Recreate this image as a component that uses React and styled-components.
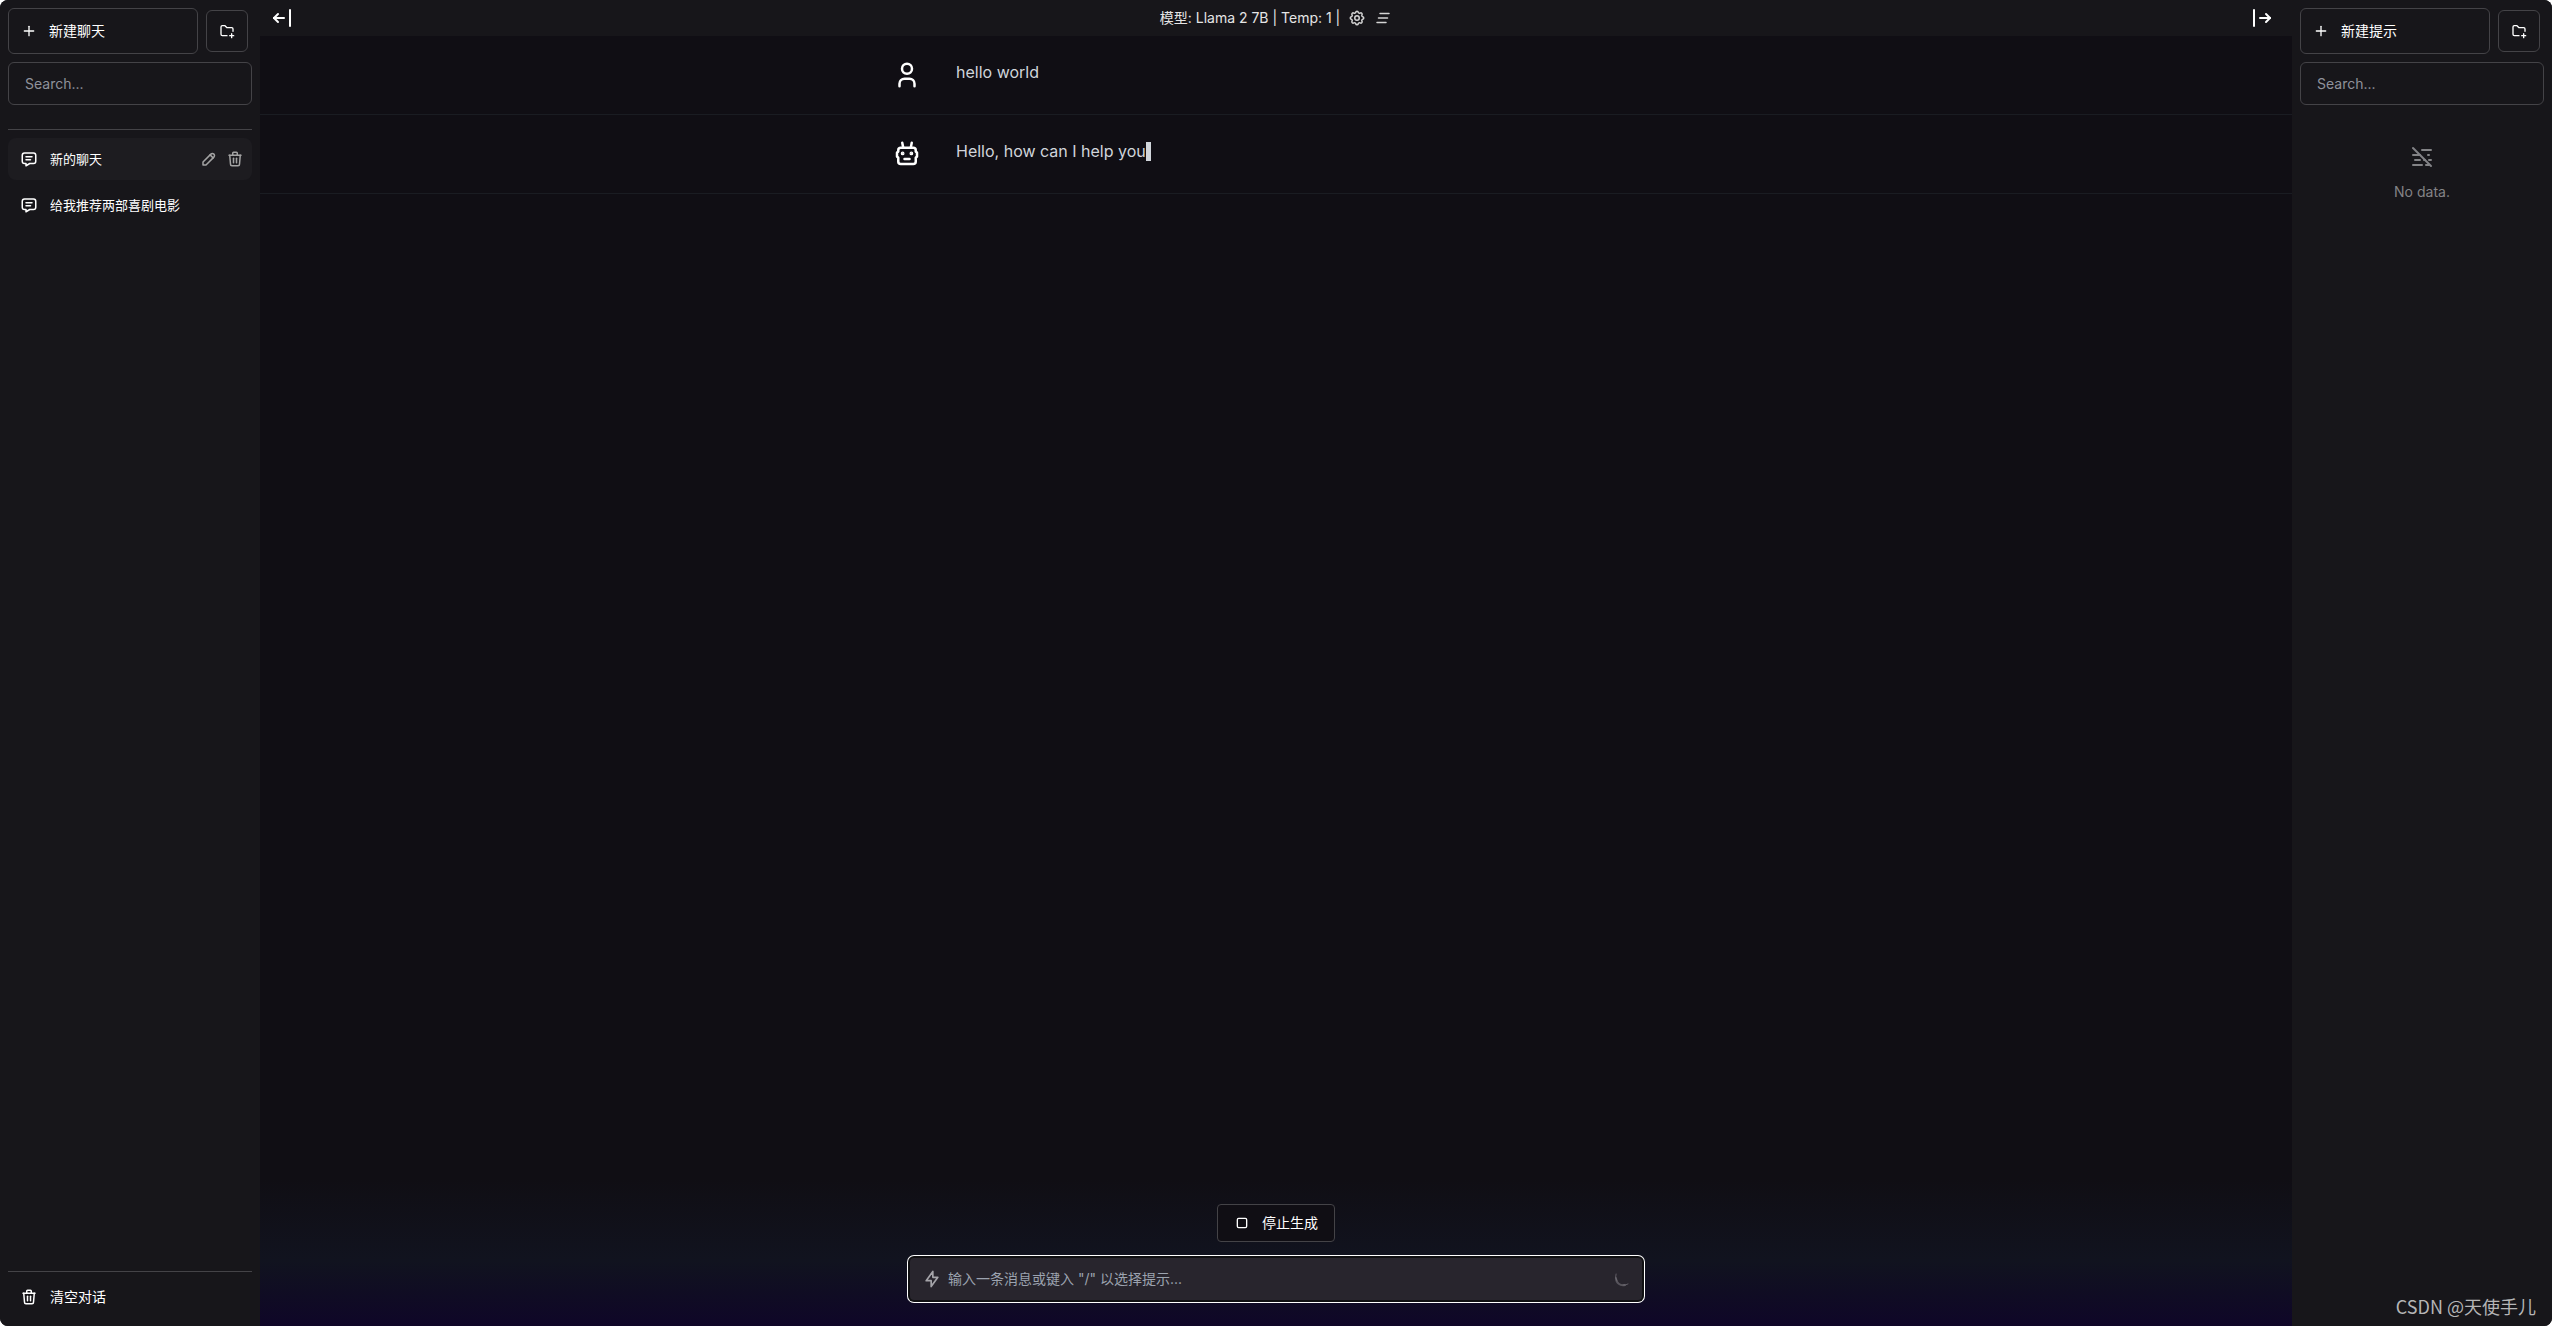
import React from "react";
import styled, { createGlobalStyle } from "styled-components";
import {
  TbArrowBarLeft,
  TbArrowBarRight,
  TbBolt,
  TbClearAll,
  TbFolderPlus,
  TbMessage,
  TbMistOff,
  TbPencil,
  TbPlayerStop,
  TbPlus,
  TbSettings,
  TbTrash,
  TbUser,
} from "react-icons/tb";

const chats = [
  { id: 1, name: "新的聊天", active: true },
  { id: 2, name: "给我推荐两部喜剧电影", active: false },
];

const RobotIcon = () => (
  <svg width="30" height="30" viewBox="0 0 24 24" fill="none" stroke="currentColor" strokeWidth="2" strokeLinecap="round" strokeLinejoin="round">
    <path d="M7 7h10a2 2 0 0 1 2 2v1l1 1v3l-1 1v3a2 2 0 0 1-2 2H7a2 2 0 0 1-2-2v-3l-1-1v-3l1-1V9a2 2 0 0 1 2-2z" />
    <path d="M10 16h4" />
    <circle cx="8.5" cy="11.5" r=".5" fill="currentColor" />
    <circle cx="15.5" cy="11.5" r=".5" fill="currentColor" />
    <path d="M9 7l-.8-4M15 7l.8-4" />
  </svg>
);

const SpinnerIcon = () => (
  <svg width="16" height="16" viewBox="0 0 16 16" fill="none" stroke="#77747c" strokeLinecap="round">
    <path d="M2 3a7 7 0 0 0 1 7" strokeWidth="1" opacity=".7" />
    <path d="M2 7a7 7 0 0 0 9 7" strokeWidth="2" opacity=".6" />
    <path d="M9 14a7 7 0 0 0 5-1" strokeWidth="1" opacity=".7" />
  </svg>
);

const SidebarTop = ({ label, id }) => (
  <>
    <Actions>
      <NewButton type="button">
        <TbPlus size={16} />
        {label}
      </NewButton>
      <FolderButton type="button" aria-label="New folder">
        <TbFolderPlus size={16} />
      </FolderButton>
    </Actions>
    <Search id={id} type="text" placeholder="Search..." aria-label="Search..." />
  </>
);

const App = () => {
  return (
    <>
      <GlobalStyle />
      <Page>
        <Sidebar>
          <SidebarTop label="新建聊天" id="search-chats" />
          <ChatList>
            {chats.map((chat) => (
              <ChatRow key={chat.id} $active={chat.active}>
                <ChatButton type="button">
                  <TbMessage size={18} />
                  <ChatName>{chat.name}</ChatName>
                </ChatButton>
                {chat.active && (
                  <RowActions>
                    <IconButton type="button" aria-label="Edit">
                      <TbPencil size={18} />
                    </IconButton>
                    <IconButton type="button" aria-label="Delete">
                      <TbTrash size={18} />
                    </IconButton>
                  </RowActions>
                )}
              </ChatRow>
            ))}
          </ChatList>
          <SidebarFooter>
            <ClearButton type="button">
              <TbTrash size={18} />
              清空对话
            </ClearButton>
          </SidebarFooter>
        </Sidebar>

        <Main>
          <TopBar>
            <ToggleButton type="button" aria-label="Hide chats">
              <TbArrowBarLeft size={24} />
            </ToggleButton>
            <ModelInfo>
              <span>模型: Llama 2 7B | Temp: 1 |</span>
              <HeaderButton type="button" aria-label="Settings">
                <TbSettings size={18} />
              </HeaderButton>
              <HeaderButton type="button" aria-label="Clear all">
                <TbClearAll size={18} />
              </HeaderButton>
            </ModelInfo>
            <ToggleButton type="button" aria-label="Hide prompts" $right>
              <TbArrowBarRight size={24} />
            </ToggleButton>
          </TopBar>

          <Messages>
            <Message>
              <MessageInner>
                <Avatar>
                  <TbUser size={30} />
                </Avatar>
                <MessageText>hello world</MessageText>
              </MessageInner>
            </Message>
            <Message>
              <MessageInner>
                <Avatar>
                  <RobotIcon />
                </Avatar>
                <MessageText>
                  Hello, how can I help you
                  <Cursor />
                </MessageText>
              </MessageInner>
            </Message>
          </Messages>

          <Composer>
            <StopButton type="button">
              <TbPlayerStop size={16} />
              停止生成
            </StopButton>
            <InputBox>
              <TbBolt size={20} />
              <Prompt rows={1} aria-label="Message" placeholder={'输入一条消息或键入 "/" 以选择提示...'} />
              <SpinnerIcon />
            </InputBox>
          </Composer>
        </Main>

        <Sidebar>
          <SidebarTop label="新建提示" id="search-prompts" />
          <Empty>
            <TbMistOff size={24} />
            No data.
          </Empty>
        </Sidebar>
        <Watermark>CSDN @天使手儿</Watermark>
      </Page>
    </>
  );
};

export default App;

const GlobalStyle = createGlobalStyle`
  * {
    box-sizing: border-box;
  }

  body {
    margin: 0;
    background: #ffffff;
  }

  body, button, input, textarea {
    font-family: Inter, "Noto Sans CJK SC", sans-serif;
    font-size: 14px;
    line-height: 20px;
  }

  button {
    padding: 0;
    border: 0;
    background: none;
    color: inherit;
    cursor: pointer;
  }

  svg {
    display: block;
    flex-shrink: 0;
  }
`;

const Page = styled.div`
  position: relative;
  display: flex;
  height: 100vh;
  border-radius: 8px;
  overflow: hidden;
  background: #100e14;
  color: #ffffff;
`;

const Sidebar = styled.aside`
  display: flex;
  flex-direction: column;
  flex: 0 0 260px;
  gap: 8px;
  padding: 8px;
  background: #17161a;
`;

const Actions = styled.div`
  display: flex;
  align-items: center;
  gap: 8px;
`;

const NewButton = styled.button`
  display: flex;
  align-items: center;
  gap: 12px;
  width: 190px;
  padding: 12px;
  border: 1px solid #444347;
  border-radius: 6px;
`;

const FolderButton = styled.button`
  padding: 12px;
  border: 1px solid #444347;
  border-radius: 6px;
`;

const Search = styled.input`
  width: 100%;
  height: 43px;
  padding: 0 16px;
  border: 1px solid #444347;
  border-radius: 6px;
  background: transparent;
  color: #ffffff;
  outline: none;

  &::placeholder {
    color: #8f929b;
    opacity: 1;
  }
`;

const ChatList = styled.div`
  display: flex;
  flex-direction: column;
  flex: 1;
  gap: 4px;
  margin-top: 16px;
  padding-top: 8px;
  border-top: 1px solid #444347;
`;

const ChatRow = styled.div`
  display: flex;
  align-items: center;
  height: 42px;
  border-radius: 8px;
  background: ${(props) => (props.$active ? "#1d1c20" : "transparent")};
`;

const ChatButton = styled.button`
  display: flex;
  align-items: center;
  flex: 1;
  gap: 12px;
  min-width: 0;
  padding: 0 12px;
`;

const ChatName = styled.span`
  overflow: hidden;
  white-space: nowrap;
  text-overflow: ellipsis;
  font-size: 13px;
  line-height: 20px;
`;

const RowActions = styled.div`
  display: flex;
  margin-right: 4px;
  color: #a3a3a3;
`;

const IconButton = styled.button`
  padding: 4px;
`;

const SidebarFooter = styled.div`
  padding-top: 4px;
  border-top: 1px solid #444347;
`;

const ClearButton = styled.button`
  display: flex;
  align-items: center;
  gap: 12px;
  width: 100%;
  height: 42px;
  padding: 0 12px;
`;

const Main = styled.main`
  display: flex;
  flex-direction: column;
  flex: 1;
  min-width: 0;
`;

const TopBar = styled.header`
  display: grid;
  grid-template-columns: 1fr auto 1fr;
  align-items: center;
  height: 36px;
  background: #17161a;
`;

const ToggleButton = styled.button`
  justify-self: ${(props) => (props.$right ? "end" : "start")};
  margin: ${(props) => (props.$right ? "0 18px 0 0" : "0 0 0 10px")};
  color: #ffffff;
`;

const ModelInfo = styled.div`
  display: flex;
  align-items: center;
  gap: 8px;
  color: #e5e5e5;
`;

const HeaderButton = styled.button`
  color: #d4d4d4;
`;

const Messages = styled.div`
  flex: 1;
`;

const Message = styled.div`
  border-bottom: 1px solid #1a1c22;
`;

const MessageInner = styled.div`
  display: flex;
  gap: 24px;
  max-width: 768px;
  margin: 0 auto;
  padding: 24px 0;
`;

const Avatar = styled.div`
  flex: 0 0 40px;
`;

const MessageText = styled.div`
  display: flex;
  align-items: center;
  height: 24px;
  font-size: 16px;
  line-height: 24px;
  color: #d1d5db;
`;

const Cursor = styled.span`
  width: 5px;
  height: 19px;
  background: #d1d5db;
`;

const Composer = styled.div`
  display: flex;
  flex-direction: column;
  align-items: center;
  gap: 16px;
  padding: 24px 0 26px;
  background: linear-gradient(to bottom, #100e14, #11131f 55%, #0f0628);
`;

const StopButton = styled.button`
  display: flex;
  align-items: center;
  gap: 12px;
  padding: 8px 16px;
  border: 1px solid #444347;
  border-radius: 4px;
  background: #100e14;
`;

const InputBox = styled.div`
  display: flex;
  align-items: center;
  gap: 6px;
  width: 100%;
  max-width: 732px;
  height: 42px;
  padding: 0 12px;
  border-radius: 4px;
  background: #28252d;
  box-shadow: 0 0 0 2px #101012, 0 0 0 3px #ffffff;
  color: #a5a4a9;
`;

const Prompt = styled.textarea`
  flex: 1;
  height: 20px;
  padding: 0;
  border: 0;
  resize: none;
  outline: none;
  overflow: hidden;
  background: transparent;
  color: #ffffff;

  &::placeholder {
    color: #9ca3af;
    opacity: 1;
  }
`;

const Empty = styled.div`
  display: flex;
  flex-direction: column;
  align-items: center;
  gap: 13px;
  margin-top: 32px;
  color: #838386;
`;

const Watermark = styled.div`
  position: absolute;
  right: 16px;
  bottom: 8px;
  font-family: "Noto Sans CJK SC", sans-serif;
  font-size: 18px;
  line-height: 24px;
  color: #b5b5b6;
`;
